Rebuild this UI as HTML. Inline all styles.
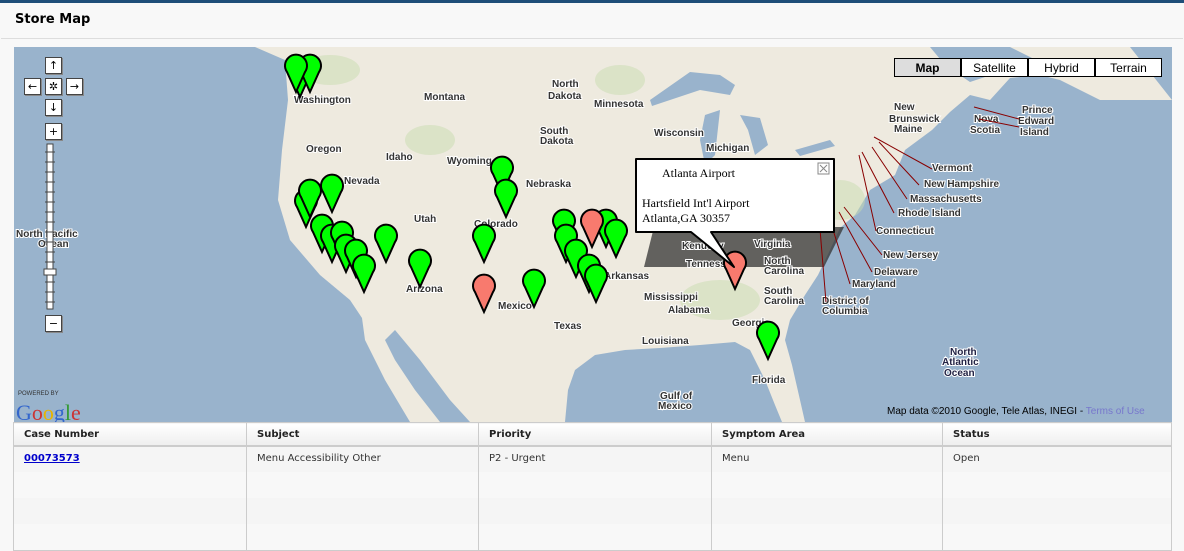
<!DOCTYPE html><html><head><style>
body{margin:0;width:1184px;height:551px;background:#f8f8f8;font-family:"DejaVu Sans",Verdana,sans-serif;overflow:hidden;position:relative}
.top{position:absolute;left:0;top:0;width:1184px;height:3px;background:#1f4e79}
.hdr{position:absolute;left:1px;top:3px;width:1182px;height:35px;border-bottom:1px solid #ddd;background:#f8f8f8}
.hdr b{position:absolute;left:14px;top:9px;font-size:13px;color:#000}
.map{position:absolute;left:14px;top:47px;width:1158px;height:375px;background:#99b3cc;overflow:hidden}
table{position:absolute;left:13px;top:422px;width:1159px;border-collapse:collapse;font-size:10px;border:1px solid #ccc}
th{text-align:left;font-weight:bold;height:22px;padding:0 10px;background:linear-gradient(#fff,#eee);border-right:1px solid #ccc;border-bottom:2px solid #ccc;color:#222}
td{height:26px;padding:0 10px;border-right:1px solid #ccc;vertical-align:top;padding-top:6px;box-sizing:border-box;color:#333}
tr.g td{background:#f5f5f5}
a{color:#00c;font-weight:bold}
.ctl{position:absolute;width:17px;height:17px;background:#fff;border:1px solid #444;font-size:11px;line-height:15px;text-align:center;box-sizing:border-box;box-shadow:1px 1px 0 #888}
.tb{position:absolute;top:11px;height:19px;background:#fff;border:1px solid #000;font:12px "Liberation Sans",sans-serif;text-align:center;line-height:18px;box-sizing:border-box}
</style></head><body>
<div class="top"></div>
<div class="hdr"><b>Store Map</b></div>
<div class="map">
<svg width="1158" height="375" style="position:absolute;left:0;top:0">
<g transform="translate(-14,-47)">
<rect x="14" y="47" width="1158" height="375" fill="#eeeadf"/>
<g fill="#99b3cc">
<path d="M14 47 L255 47 L285 60 L288 100 L282 150 L278 200 L290 240 L320 275 L350 300 L362 318 L365 340 L385 380 L410 422 L14 422 Z"/>
<path d="M395 330 L420 360 L450 400 L470 422 L440 422 L415 390 L395 360 L385 340 Z"/>
<path d="M565 422 L568 390 L575 370 L595 355 L625 350 L660 348 L700 345 L735 342 L750 350 L765 380 L775 405 L782 422 Z"/>
<path d="M1172 100 L1100 100 L1060 80 L1040 75 L1010 78 L990 100 L970 95 L950 112 L932 130 L905 150 L895 175 L870 190 L855 215 L840 228 L830 250 L818 275 L805 295 L790 320 L785 340 L792 365 L800 400 L805 422 L1172 422 Z"/>
<path d="M930 47 L1010 47 L1040 62 L1000 72 L970 82 L945 65 Z"/>
<path d="M1130 47 L1172 47 L1172 100 Z"/>
<path d="M650 100 L690 72 L720 75 L735 85 L730 95 L700 90 L670 100 L652 106 Z"/>
<path d="M705 115 L720 110 L715 155 L705 165 L700 140 Z"/>
<path d="M740 115 L760 118 L768 145 L755 155 L748 130 Z"/>
<path d="M795 150 L830 140 L835 146 L800 156 Z"/>
</g>
<g fill="#c8dcb0" opacity=".5"><ellipse cx="330" cy="70" rx="30" ry="15"/><ellipse cx="430" cy="140" rx="25" ry="15"/><ellipse cx="620" cy="80" rx="25" ry="15"/><ellipse cx="840" cy="200" rx="25" ry="20"/><ellipse cx="720" cy="300" rx="40" ry="20"/></g>
</g>
<path d="M640 180 L830 180 L810 220 L630 220 Z" fill="#333" opacity=".75"/>
<g font-family="Liberation Sans,sans-serif" font-size="10" font-weight="bold" fill="#333" stroke="#fff" stroke-width="2" paint-order="stroke">
<text x="280" y="56">Washington</text><text x="292" y="105">Oregon</text><text x="372" y="113">Idaho</text><text x="410" y="53">Montana</text><text x="538" y="40">North</text><text x="534" y="52">Dakota</text><text x="580" y="60">Minnesota</text><text x="526" y="87">South</text><text x="526" y="97">Dakota</text><text x="640" y="89">Wisconsin</text><text x="692" y="104">Michigan</text><text x="433" y="117">Wyoming</text><text x="512" y="140">Nebraska</text><text x="330" y="137">Nevada</text><text x="400" y="175">Utah</text><text x="460" y="180">Colorado</text><text x="392" y="245">Arizona</text><text x="484" y="262">Mexico</text><text x="540" y="282">Texas</text><text x="590" y="232">Arkansas</text><text x="630" y="253">Mississippi</text><text x="654" y="266">Alabama</text><text x="718" y="279">Georgia</text><text x="738" y="336">Florida</text><text x="750" y="217">North</text><text x="750" y="227">Carolina</text><text x="750" y="247">South</text><text x="750" y="257">Carolina</text><text x="740" y="200">Virginia</text><text x="668" y="202">Kenucky</text><text x="672" y="220">Tennessee</text><text x="628" y="297">Louisiana</text><text x="646" y="352">Gulf of</text><text x="644" y="362">Mexico</text><text x="875" y="75">Brunswick</text><text x="880" y="63">New</text><text x="960" y="75">Nova</text><text x="956" y="86">Scotia</text><text x="1008" y="66">Prince</text><text x="1004" y="77">Edward</text><text x="1006" y="88">Island</text><text x="880" y="85">Maine</text><text x="918" y="124">Vermont</text><text x="910" y="140">New Hampshire</text><text x="896" y="155">Massachusetts</text><text x="884" y="169">Rhode Island</text><text x="862" y="187">Connecticut</text><text x="869" y="211">New Jersey</text><text x="860" y="228">Delaware</text><text x="838" y="240">Maryland</text><text x="808" y="257">District of</text><text x="808" y="267">Columbia</text><text x="2" y="190">North Pacific</text><text x="24" y="200">Ocean</text><text x="936" y="308" fill="#224">North</text><text x="928" y="318" fill="#224">Atlantic</text><text x="930" y="329" fill="#224">Ocean</text>
</g>
<g stroke="#800" stroke-width="1"><path d="M960 60L1005 72M965 72L1005 80M860 90L918 122M865 95L905 138M858 100L893 152M848 105L880 166M845 108L862 184M830 160L868 208M825 165L858 225M815 170L836 237M805 170L812 255"/></g>
<g stroke="#000" stroke-width="2">
<g fill="#0f0">
<path transform="translate(286,50)" d="M0 0L-9 -20A11 11 0 1 1 9 -20Z"/><path transform="translate(296,45)" d="M0 0L-9 -20A11 11 0 1 1 9 -20Z"/><path transform="translate(282,45)" d="M0 0L-9 -20A11 11 0 1 1 9 -20Z"/><path transform="translate(318,165)" d="M0 0L-9 -20A11 11 0 1 1 9 -20Z"/><path transform="translate(292,180)" d="M0 0L-9 -20A11 11 0 1 1 9 -20Z"/><path transform="translate(296,170)" d="M0 0L-9 -20A11 11 0 1 1 9 -20Z"/><path transform="translate(308,205)" d="M0 0L-9 -20A11 11 0 1 1 9 -20Z"/><path transform="translate(318,215)" d="M0 0L-9 -20A11 11 0 1 1 9 -20Z"/><path transform="translate(328,212)" d="M0 0L-9 -20A11 11 0 1 1 9 -20Z"/><path transform="translate(332,225)" d="M0 0L-9 -20A11 11 0 1 1 9 -20Z"/><path transform="translate(342,230)" d="M0 0L-9 -20A11 11 0 1 1 9 -20Z"/><path transform="translate(350,245)" d="M0 0L-9 -20A11 11 0 1 1 9 -20Z"/><path transform="translate(372,215)" d="M0 0L-9 -20A11 11 0 1 1 9 -20Z"/><path transform="translate(406,240)" d="M0 0L-9 -20A11 11 0 1 1 9 -20Z"/><path transform="translate(470,215)" d="M0 0L-9 -20A11 11 0 1 1 9 -20Z"/><path transform="translate(488,147)" d="M0 0L-9 -20A11 11 0 1 1 9 -20Z"/><path transform="translate(492,170)" d="M0 0L-9 -20A11 11 0 1 1 9 -20Z"/><path transform="translate(520,260)" d="M0 0L-9 -20A11 11 0 1 1 9 -20Z"/><path transform="translate(550,200)" d="M0 0L-9 -20A11 11 0 1 1 9 -20Z"/><path transform="translate(552,215)" d="M0 0L-9 -20A11 11 0 1 1 9 -20Z"/><path transform="translate(562,230)" d="M0 0L-9 -20A11 11 0 1 1 9 -20Z"/><path transform="translate(575,245)" d="M0 0L-9 -20A11 11 0 1 1 9 -20Z"/><path transform="translate(582,255)" d="M0 0L-9 -20A11 11 0 1 1 9 -20Z"/><path transform="translate(592,200)" d="M0 0L-9 -20A11 11 0 1 1 9 -20Z"/><path transform="translate(602,210)" d="M0 0L-9 -20A11 11 0 1 1 9 -20Z"/><path transform="translate(754,312)" d="M0 0L-9 -20A11 11 0 1 1 9 -20Z"/>
</g>
<g fill="#f87a6e"><path transform="translate(470,265)" d="M0 0L-9 -20A11 11 0 1 1 9 -20Z"/><path transform="translate(578,200)" d="M0 0L-9 -20A11 11 0 1 1 9 -20Z"/><path transform="translate(721,242)" d="M0 0L-9 -20A11 11 0 1 1 9 -20Z"/></g>
</g>
<path d="M622 112 H820 V185 H697 L720 220 L677 185 H622 Z" fill="#fff" stroke="#000" stroke-width="2" stroke-linejoin="round"/>
<g font-family="Liberation Serif,serif" font-size="12"><text x="648" y="130">Atlanta Airport</text><text x="628" y="160">Hartsfield Int'l Airport</text><text x="628" y="175">Atlanta,GA 30357</text></g>
<rect x="804" y="116" width="11" height="11" fill="#fff" stroke="#888"/><path d="M806 118l7 7M813 118l-7 7" stroke="#888"/>
<text x="2" y="373" font-family="Liberation Serif,serif" font-size="22" fill="#3366cc">G<tspan fill="#cc3333">o</tspan><tspan fill="#e8b400">o</tspan>g<tspan fill="#339933">l</tspan><tspan fill="#cc3333">e</tspan></text>
<text x="4" y="348" font-size="6" font-family="Liberation Sans,sans-serif" fill="#333">POWERED BY</text>
<text x="873" y="367" font-family="Liberation Sans,sans-serif" font-size="10" fill="#000">Map data ©2010  Google, Tele Atlas, INEGI - <tspan fill="#77c">Terms of Use</tspan></text>
<g stroke="#444" fill="#fff"><rect x="33" y="97" width="6" height="165"/><path d="M31 105h10M31 115h10M31 125h10M31 135h10M31 145h10M31 155h10M31 165h10M31 175h10M31 185h10M31 195h10M31 205h10M31 215h10M31 235h10M31 245h10M31 255h10"/><rect x="30" y="222" width="12" height="6"/></g>
</svg>
<div class="ctl" style="left:31px;top:10px">↑</div><div class="ctl" style="left:10px;top:31px">←</div><div class="ctl" style="left:31px;top:31px">✲</div><div class="ctl" style="left:52px;top:31px">→</div><div class="ctl" style="left:31px;top:52px">↓</div><div class="ctl" style="left:31px;top:76px">+</div><div class="ctl" style="left:31px;top:268px">−</div>
<div class="tb" style="left:880px;width:67px;font-weight:bold;background:#ddd">Map</div><div class="tb" style="left:947px;width:67px">Satellite</div><div class="tb" style="left:1014px;width:67px">Hybrid</div><div class="tb" style="left:1081px;width:67px">Terrain</div>
</div>
<table><tr><th style="width:212px">Case Number</th><th style="width:211px">Subject</th><th style="width:212px">Priority</th><th style="width:210px">Symptom Area</th><th>Status</th></tr>
<tr class="g"><td><a href="#">00073573</a></td><td>Menu Accessibility Other</td><td>P2 - Urgent</td><td>Menu</td><td>Open</td></tr>
<tr><td></td><td></td><td></td><td></td><td></td></tr>
<tr class="g"><td></td><td></td><td></td><td></td><td></td></tr>
<tr><td style="height:24px"></td><td></td><td></td><td></td><td></td></tr></table>
</body></html>
